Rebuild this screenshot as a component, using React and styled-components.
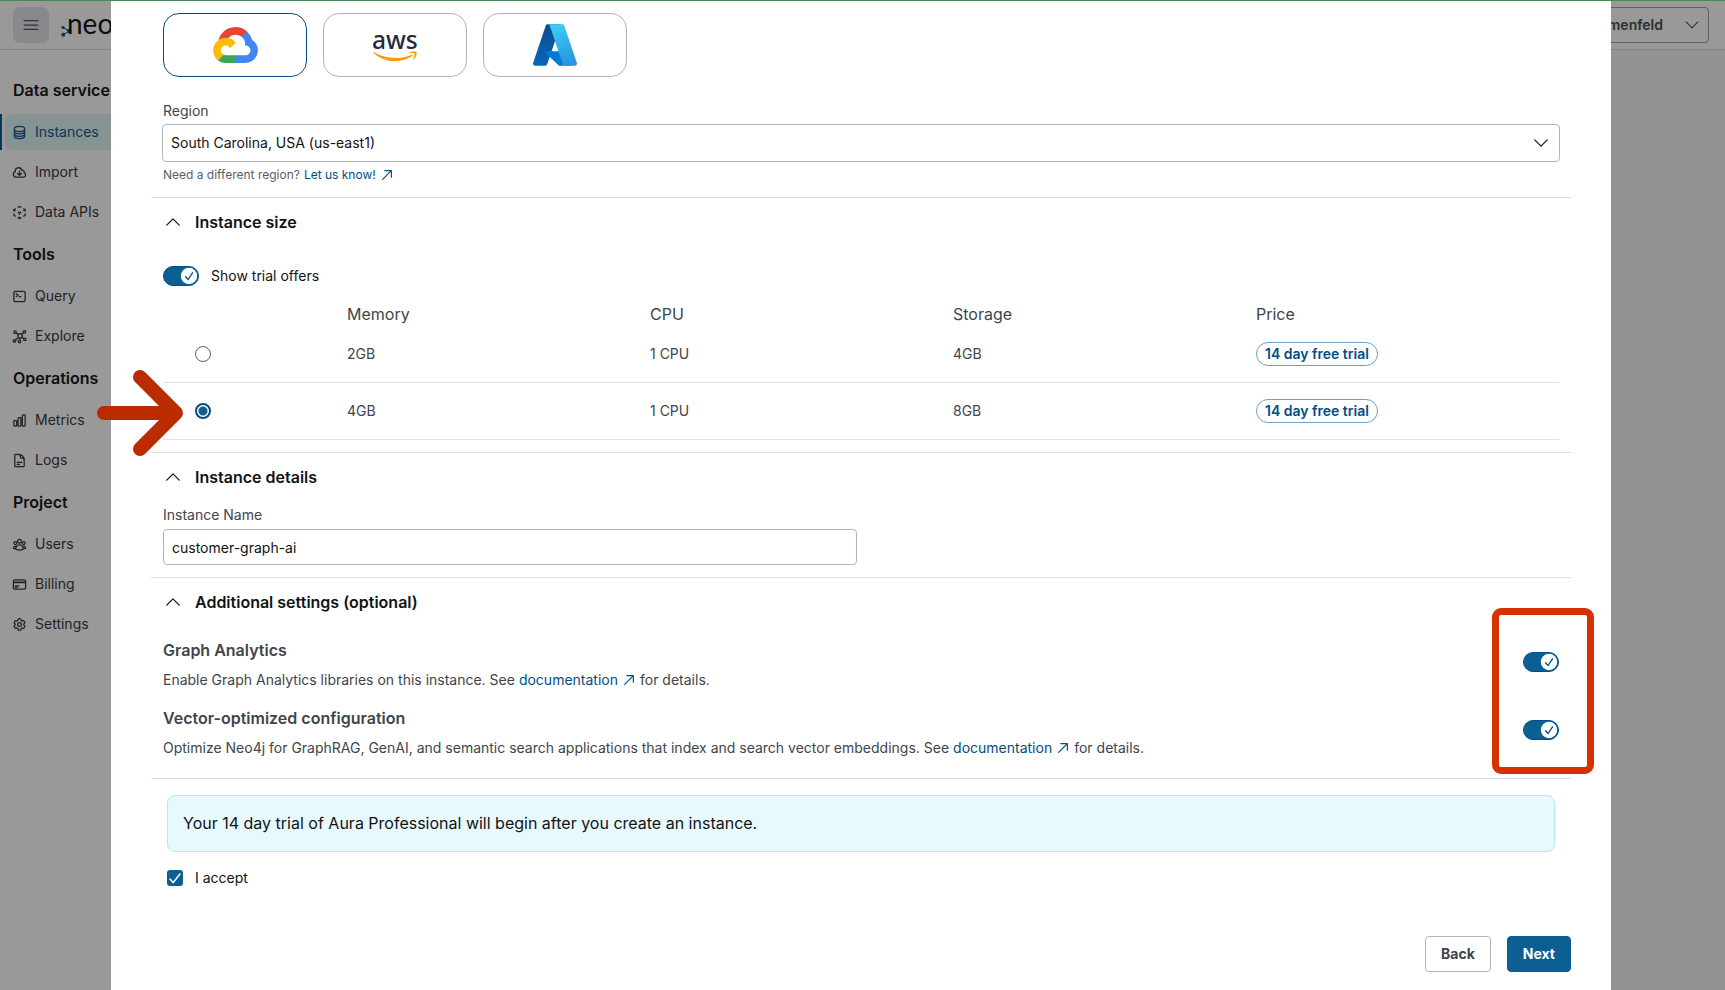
import React, { useState } from 'react';
import styled, { createGlobalStyle, css } from 'styled-components';
import {
  HiOutlineCircleStack,
  HiOutlineCloudArrowDown,
  HiOutlineCubeTransparent,
  HiOutlineCommandLine,
  HiOutlineChartBar,
  HiOutlineDocumentText,
  HiOutlineUserGroup,
  HiOutlineCreditCard,
  HiOutlineCog6Tooth,
  HiOutlineBars3,
  HiOutlineChevronUp,
  HiOutlineChevronDown,
  HiOutlineArrowUpRight,
} from 'react-icons/hi2';

const color = {
  primary: '#0b5f92',
  primaryDark: '#014e85',
  link: '#014e85',
  text: '#111315',
  textSoft: '#40454c',
  textMuted: '#5a6069',
  line: '#dfe0e2',
  field: '#b2b5ba',
};

const GlobalStyle = createGlobalStyle`
  *, *::before, *::after { box-sizing: border-box; }
  body {
    margin: 0;
    font-family: Inter, "Liberation Sans", sans-serif;
    font-size: 14px;
    line-height: 20px;
    color: ${color.text};
  }
  button, input, select { font: inherit; color: inherit; margin: 0; }
  h2, h3, p, ul { margin: 0; padding: 0; }
  ul { list-style: none; }
  a { color: ${color.link}; text-decoration: none; }
  svg { display: block; flex: none; }
`;

const Page = styled.div`
  display: grid;
  grid-template-columns: minmax(0, 1fr);
  min-height: 100vh;
  overflow: hidden;
  border-top: 1px solid #4f8554;
`;

/* Console behind the dialog */

const Shell = styled.div`
  grid-area: 1 / 1;
  display: flex;
  flex-direction: column;
  background: #f3f7f5;
`;

const TopBar = styled.header`
  display: flex;
  align-items: center;
  gap: 12px;
  height: 49px;
  padding: 0 16px 0 13px;
  background: #fff;
  border-bottom: 1px solid #d9dbdd;
`;

const MenuButton = styled.button`
  display: grid;
  place-items: center;
  width: 36px;
  height: 36px;
  padding: 0;
  border: 0;
  border-radius: 7px;
  background: #e2e4e7;
  color: #50555c;
`;

const Brand = styled.div`
  display: flex;
  align-items: center;
  padding-bottom: 4px;
  font: 400 28px/32px Lato, sans-serif;
  color: #14171a;
  svg { margin-right: -5px; }
`;

const AccountButton = styled.button`
  display: flex;
  align-items: center;
  justify-content: flex-end;
  gap: 20px;
  width: 160px;
  height: 36px;
  margin-left: auto;
  padding: 0 7px;
  border: 1px solid #9b9fa5;
  border-radius: 4px;
  background: transparent;
  color: #4a4f56;
  font-weight: 600;
`;

const Sidebar = styled.nav`
  flex: 1;
  width: 200px;
  padding-top: 16px;
  background: #fff;
`;

const NavHeading = styled.h2`
  padding-left: 13px;
  font-size: 16px;
  line-height: 48px;
  font-weight: 600;
  color: #16191c;
`;

const NavList = styled.ul`
  display: flex;
  flex-direction: column;
  gap: 4px;
`;

const NavItem = styled.li`
  padding-left: 3px;
  border-left: 2px solid ${(p) => (p.$active ? color.primary : 'transparent')};
`;

const NavLink = styled.a`
  display: flex;
  align-items: center;
  gap: 8px;
  height: 36px;
  padding-left: 7px;
  border-radius: 7px;
  color: #35393f;
  ${(p) =>
    p.$active &&
    css`
      background: #e0f5f6;
      color: ${color.primary};
    `}
  svg { stroke-width: 2; }
`;

const Backdrop = styled.div`
  grid-area: 1 / 1;
  z-index: 1;
  display: flex;
  padding: 0 114px 0 111px;
  background: rgba(0, 0, 0, 0.4);
`;

/* Dialog */

const Dialog = styled.main`
  flex: 1;
  min-width: 0;
  padding: 12px 40px 16px;
  background: #fff;
`;

const Section = styled.section`
  padding: 0 12px ${(p) => p.$bottom || 12}px;
  border-bottom: 1px solid ${color.line};
`;

const Providers = styled.div`
  display: flex;
  gap: 16px;
  margin-bottom: 24px;
`;

const ProviderCard = styled.button`
  display: grid;
  place-items: center;
  width: 144px;
  height: 64px;
  padding: 0;
  border: 1px solid ${(p) => (p.$selected ? color.primaryDark : color.field)};
  border-radius: 16px;
  background: #fff;
`;

const FieldLabel = styled.label`
  display: block;
  color: ${color.textSoft};
`;

const SelectBox = styled.div`
  display: grid;
  align-items: center;
  margin: 3px -1px 5px;
  > * { grid-area: 1 / 1; }
  > svg {
    justify-self: end;
    margin-right: 9px;
    pointer-events: none;
  }
`;

const Select = styled.select`
  appearance: none;
  width: 100%;
  height: 38px;
  padding: 0 8px;
  border: 1px solid ${color.field};
  border-radius: 4px;
  background: #fff;
`;

const HelpText = styled.p`
  display: flex;
  align-items: center;
  gap: 4px;
  font-size: 12px;
  line-height: 16px;
  color: ${color.textMuted};
`;

const ExternalLink = styled.a`
  display: inline-flex;
  align-items: center;
  gap: 4px;
  svg { stroke-width: 2; }
`;

const SectionTitle = styled.h2`
  font-size: 16px;
  line-height: 24px;
`;

const SectionToggle = styled.button`
  display: flex;
  align-items: center;
  gap: 12px;
  width: 100%;
  height: 48px;
  padding: 0;
  border: 0;
  background: none;
  font-weight: 600;
  text-align: left;
`;

const SwitchBox = styled.span`
  display: inline-grid;
  flex: none;
  > * { grid-area: 1 / 1; }
  > svg { pointer-events: none; }
`;

const SwitchInput = styled.input`
  appearance: none;
  width: 36px;
  height: 20px;
  border-radius: 10px;
  border: 1px solid ${color.primaryDark};
  background: ${color.primary};
`;

const OfferToggle = styled.label`
  display: flex;
  align-items: center;
  gap: 12px;
  margin: 20px 0 16px;
`;

const SizeTable = styled.table`
  width: 100%;
  table-layout: fixed;
  border-collapse: separate;
  border-spacing: 0;
  color: ${color.textSoft};
`;

const HeadCell = styled.th`
  width: ${(p) => (p.$narrow ? '184px' : 'auto')};
  height: 24px;
  padding: 0;
  font-size: 16px;
  font-weight: 400;
  text-align: left;
`;

const Cell = styled.td`
  height: 57px;
  padding: 0;
  border-bottom: 1px solid ${color.line};
`;

const RadioCell = styled(Cell)`
  position: relative;
  padding-left: 32px;
`;

const Radio = styled.input`
  appearance: none;
  display: block;
  width: 16px;
  height: 16px;
  border: 1px solid #5a6069;
  border-radius: 50%;
  background: #fff;
  &:checked {
    border: 2px solid ${color.primaryDark};
    background: radial-gradient(circle, ${color.primary} 4px, #fff 5px);
  }
`;

const TrialPill = styled.span`
  display: inline-block;
  padding: 1px 8px;
  border: 1px solid #6f9fc4;
  border-radius: 12px;
  font-weight: 600;
  color: ${color.link};
`;

const ArrowCallout = styled.svg`
  position: absolute;
  left: -66px;
  top: -14px;
  pointer-events: none;
`;

const TextInput = styled.input`
  display: block;
  width: calc(50% - 4px);
  height: 36px;
  margin-top: 4px;
  padding: 0 8px;
  border: 1px solid ${color.field};
  border-radius: 4px;
  background: #fff;
`;

const DetailsBody = styled.div`
  padding-top: 4px;
`;

const SettingsList = styled.div`
  position: relative;
  display: flex;
  flex-direction: column;
  gap: 16px;
  margin-top: 12px;
`;

const Setting = styled.div`
  display: flex;
  justify-content: space-between;
  align-items: flex-start;
  color: ${color.textSoft};
  > span { margin-top: 14px; }
`;

const SettingTitle = styled.h3`
  margin-bottom: 8px;
  font-size: 16px;
  line-height: 24px;
  font-weight: 600;
`;

const SettingText = styled.p`
  display: flex;
  gap: 4px;
`;

const BoxCallout = styled.div`
  position: absolute;
  top: -30px;
  right: -35px;
  bottom: -16px;
  width: 102px;
  border: 7px solid #d43300;
  border-radius: 9px;
  pointer-events: none;
`;

const Banner = styled.p`
  margin: 16px;
  padding: 15px 15px 16px;
  border: 1px solid #b0ebee;
  border-radius: 8px;
  background: #e7f9fd;
  font-size: 16px;
  line-height: 24px;
`;

const Accept = styled.label`
  display: flex;
  align-items: center;
  gap: 12px;
  width: fit-content;
  margin-left: 16px;
`;

const AcceptInput = styled.input`
  appearance: none;
  width: 16px;
  height: 16px;
  border-radius: 3px;
  background: ${color.primary};
`;

const Actions = styled.footer`
  display: flex;
  justify-content: flex-end;
  gap: 16px;
  margin-top: 48px;
`;

const ActionButton = styled.button`
  height: 36px;
  padding: 0 15px;
  border: 1px solid ${(p) => (p.$primary ? color.primary : color.field)};
  border-radius: 4px;
  background: ${(p) => (p.$primary ? color.primary : '#fff')};
  color: ${(p) => (p.$primary ? '#fff' : color.textSoft)};
  font-weight: 700;
`;

/* Drawings */

const GoogleCloudLogo = () => (
  <svg width="45" height="36" viewBox="0 0 256 206" aria-hidden="true">
    <path fill="#EA4335" d="M170.25 56.82l22.25-22.25 1.49-9.37C153.44-11.68 88.98-7.5 52.42 33.92 42.27 45.42 34.73 59.76 30.72 74.57l7.97-1.12 44.5-7.34 3.44-3.51c19.8-21.75 53.27-24.67 76.13-6.17l7.49.39z" />
    <path fill="#4285F4" d="M224.2 73.92a100.25 100.25 0 0 0-30.21-48.72l-31.23 31.23a55.52 55.52 0 0 1 20.37 44.04v5.54a27.8 27.8 0 1 1 0 55.28h-55.67l-5.46 5.93v33.34l5.46 5.23h55.67c39.93.31 72.56-31.49 72.87-71.42a72.32 72.32 0 0 0-31.8-60.45" />
    <path fill="#34A853" d="M71.87 205.8h55.59v-44.51H71.87a27.28 27.28 0 0 1-11.4-2.5l-7.89 2.42-22.4 22.25-1.96 7.58a72.16 72.16 0 0 0 43.65 14.76" />
    <path fill="#FBBC05" d="M71.87 61.43A72.3 72.3 0 0 0 28.22 191.04l32.25-32.25a27.8 27.8 0 1 1 36.78-36.77l32.25-32.25a72.23 72.23 0 0 0-57.63-28.34" />
  </svg>
);

const AwsLogo = () => (
  <svg width="44" height="50" viewBox="0 -42 304 346" aria-label="aws">
    <text x="151" y="156" textAnchor="middle" fontFamily="'Noto Sans', sans-serif" fontSize="170" fontWeight="500" fill="#232b3c">aws</text>
    <g fill="#ff9900" transform="translate(0 62)">
      <path d="M273.5 143.7c-32.9 24.3-80.7 37.2-121.8 37.2-57.6 0-109.5-21.3-148.7-56.7-3.1-2.8-.3-6.6 3.4-4.4 42.4 24.6 94.7 39.5 148.8 39.5 36.5 0 76.6-7.6 113.5-23.2 5.5-2.5 10.2 3.6 4.8 7.6z" />
      <path d="M287.2 128.1c-4.2-5.4-27.8-2.6-38.5-1.3-3.2.4-3.7-2.4-.8-4.5 18.8-13.2 49.7-9.4 53.3-5 3.6 4.5-1 35.4-18.6 50.2-2.7 2.3-5.3 1.1-4.1-1.9 4-9.9 12.9-32.2 8.7-37.5z" />
    </g>
  </svg>
);

const AzureLogo = () => (
  <svg width="48" height="48" viewBox="0 0 96 96" aria-hidden="true">
    <defs>
      <linearGradient id="azLeft" x1="-1032" x2="-1059" y1="145" y2="66" gradientTransform="matrix(1 0 0 -1 1075 158)" gradientUnits="userSpaceOnUse">
        <stop stopColor="#114a8b" /><stop offset="1" stopColor="#0669bc" />
      </linearGradient>
      <linearGradient id="azRight" x1="-1027" x2="-998" y1="147" y2="68" gradientTransform="matrix(1 0 0 -1 1075 158)" gradientUnits="userSpaceOnUse">
        <stop stopColor="#3ccbf4" /><stop offset="1" stopColor="#2892df" />
      </linearGradient>
    </defs>
    <path fill="url(#azLeft)" d="M33.338 6.544h26.038l-27.03 80.087a4.152 4.152 0 0 1-3.933 2.824H8.149a4.145 4.145 0 0 1-3.928-5.47L29.404 9.368a4.152 4.152 0 0 1 3.934-2.825z" />
    <path fill="#0078d4" d="M71.175 60.261h-41.29a1.911 1.911 0 0 0-1.305 3.309l26.532 24.764a4.171 4.171 0 0 0 2.846 1.121h23.38z" />
    <path fill="url(#azRight)" d="M66.595 9.364a4.145 4.145 0 0 0-3.928-2.82H33.648a4.146 4.146 0 0 1 3.928 2.82l25.184 74.62a4.146 4.146 0 0 1-3.928 5.472h29.02a4.146 4.146 0 0 0 3.927-5.472z" />
  </svg>
);

const NeoMark = () => (
  <svg width="11" height="28" viewBox="0 0 11 28" aria-hidden="true">
    <g fill="#0b5f92" stroke="#0b5f92">
      <path d="M2 18.500L8 22 2 26" fill="none" strokeWidth="1" />
      <circle cx="2" cy="18.500" r="1.600" stroke="none" />
      <circle cx="8.200" cy="22" r="2.200" stroke="none" />
      <circle cx="2.300" cy="25.800" r="2" stroke="none" />
    </g>
  </svg>
);

const ExploreIcon = ({ size }) => (
  <svg width={size} height={size} viewBox="0 0 24 24" fill="none" stroke="currentColor" aria-hidden="true">
    <circle cx="13" cy="11" r="3.500" />
    <circle cx="5" cy="5" r="2" />
    <circle cx="20" cy="4.500" r="2" />
    <circle cx="4" cy="19" r="2" />
    <circle cx="12" cy="20" r="2" />
    <circle cx="20.500" cy="16.500" r="2" />
    <path d="M6.500 6.300l4 2.700M15.500 8.500l3-2.700M5.500 17.500l5-4M12.300 18l.4-3.500M16 13l2.800 2.300" />
  </svg>
);

/* Composite parts */

const Switch = ({ label, id }) => {
  const [on, setOn] = useState(true);
  return (
    <SwitchBox>
      <SwitchInput id={id} type="checkbox" role="switch" aria-label={label} checked={on} onChange={() => setOn(!on)} />
      <svg width="36" height="20" viewBox="0 0 36 20" aria-hidden="true">
        <circle cx={on ? 26 : 10} cy="10" r="8.200" fill="#fff" />
        {on && <path d="M22.500 10.800l2.600 2.700 4.400-6.700" fill="none" stroke={color.primaryDark} strokeWidth="1.300" strokeLinecap="round" />}
      </svg>
    </SwitchBox>
  );
};

const SectionHeader = ({ children }) => (
  <SectionTitle>
    <SectionToggle type="button" aria-expanded="true">
      <HiOutlineChevronUp size={20} />
      {children}
    </SectionToggle>
  </SectionTitle>
);

const DocLink = ({ children }) => (
  <ExternalLink href="#docs">
    {children}
    <HiOutlineArrowUpRight size={14} />
  </ExternalLink>
);

const navGroups = [
  { title: 'Data service', items: [['Instances', HiOutlineCircleStack], ['Import', HiOutlineCloudArrowDown], ['Data APIs', HiOutlineCubeTransparent]] },
  { title: 'Tools', items: [['Query', HiOutlineCommandLine], ['Explore', ExploreIcon]] },
  { title: 'Operations', items: [['Metrics', HiOutlineChartBar], ['Logs', HiOutlineDocumentText]] },
  { title: 'Project', items: [['Users', HiOutlineUserGroup], ['Billing', HiOutlineCreditCard], ['Settings', HiOutlineCog6Tooth]] },
];

const sizes = [
  { memory: '2GB', cpu: '1 CPU', storage: '4GB' },
  { memory: '4GB', cpu: '1 CPU', storage: '8GB' },
];

export default function App() {
  const [provider, setProvider] = useState('gcp');
  const [size, setSize] = useState('4GB');
  const [name, setName] = useState('customer-graph-ai');
  const [accepted, setAccepted] = useState(true);
  const providers = [['gcp', 'Google Cloud', GoogleCloudLogo], ['aws', 'AWS', AwsLogo], ['azure', 'Azure', AzureLogo]];

  return (
    <>
      <GlobalStyle />
      <Page>
        <Shell>
          <TopBar>
            <MenuButton type="button" aria-label="Menu"><HiOutlineBars3 size={20} /></MenuButton>
            <Brand><NeoMark />neo</Brand>
            <AccountButton type="button">menfeld<HiOutlineChevronDown size={18} /></AccountButton>
          </TopBar>
          <Sidebar>
            {navGroups.map((group) => (
              <React.Fragment key={group.title}>
                <NavHeading>{group.title}</NavHeading>
                <NavList>
                  {group.items.map(([label, Icon]) => (
                    <NavItem key={label} $active={label === 'Instances'}>
                      <NavLink href="#nav" $active={label === 'Instances'}><Icon size={15} />{label}</NavLink>
                    </NavItem>
                  ))}
                </NavList>
              </React.Fragment>
            ))}
          </Sidebar>
        </Shell>

        <Backdrop>
          <Dialog>
            <Section $bottom={14}>
              <Providers>
                {providers.map(([id, label, Logo]) => (
                  <ProviderCard key={id} type="button" aria-label={label} $selected={provider === id} onClick={() => setProvider(id)}>
                    <Logo />
                  </ProviderCard>
                ))}
              </Providers>
              <FieldLabel htmlFor="region">Region</FieldLabel>
              <SelectBox>
                <Select id="region"><option>South Carolina, USA (us-east1)</option></Select>
                <HiOutlineChevronDown size={20} />
              </SelectBox>
              <HelpText>Need a different region? <DocLink>Let us know!</DocLink></HelpText>
            </Section>

            <Section>
              <SectionHeader>Instance size</SectionHeader>
              <OfferToggle htmlFor="offers"><Switch id="offers" />Show trial offers</OfferToggle>
              <SizeTable>
                <thead>
                  <tr>
                    <HeadCell $narrow />
                    <HeadCell>Memory</HeadCell>
                    <HeadCell>CPU</HeadCell>
                    <HeadCell>Storage</HeadCell>
                    <HeadCell>Price</HeadCell>
                  </tr>
                </thead>
                <tbody>
                  {sizes.map((s) => (
                    <tr key={s.memory}>
                      <RadioCell>
                        <Radio type="radio" name="size" aria-label={s.memory} checked={size === s.memory} onChange={() => setSize(s.memory)} />
                        {s.memory === '4GB' && (
                          <ArrowCallout width="88" height="88" viewBox="0 0 88 88" aria-hidden="true">
                            <path d="M7 44H79M43 8L79 44L43 80" fill="none" stroke="#ba2c00" strokeWidth="14" strokeLinecap="round" strokeLinejoin="round" />
                          </ArrowCallout>
                        )}
                      </RadioCell>
                      <Cell>{s.memory}</Cell>
                      <Cell>{s.cpu}</Cell>
                      <Cell>{s.storage}</Cell>
                      <Cell><TrialPill>14 day free trial</TrialPill></Cell>
                    </tr>
                  ))}
                </tbody>
              </SizeTable>
            </Section>

            <Section>
              <SectionHeader>Instance details</SectionHeader>
              <DetailsBody>
                <FieldLabel htmlFor="name">Instance Name</FieldLabel>
                <TextInput id="name" type="text" value={name} onChange={(e) => setName(e.target.value)} />
              </DetailsBody>
            </Section>

            <Section $bottom={20}>
              <SectionHeader>Additional settings (optional)</SectionHeader>
              <SettingsList>
                <Setting>
                  <div>
                    <SettingTitle>Graph Analytics</SettingTitle>
                    <SettingText>Enable Graph Analytics libraries on this instance. See <DocLink>documentation</DocLink> for details.</SettingText>
                  </div>
                  <Switch label="Graph Analytics" />
                </Setting>
                <Setting>
                  <div>
                    <SettingTitle>Vector-optimized configuration</SettingTitle>
                    <SettingText>Optimize Neo4j for GraphRAG, GenAI, and semantic search applications that index and search vector embeddings. See <DocLink>documentation</DocLink> for details.</SettingText>
                  </div>
                  <Switch label="Vector-optimized configuration" />
                </Setting>
                <BoxCallout />
              </SettingsList>
            </Section>

            <Banner>Your 14 day trial of Aura Professional will begin after you create an instance.</Banner>
            <Accept>
              <SwitchBox>
                <AcceptInput type="checkbox" checked={accepted} onChange={() => setAccepted(!accepted)} />
                {accepted && (
                  <svg width="16" height="16" viewBox="0 0 16 16" aria-hidden="true">
                    <path d="M3 9l3.200 3.500L13 4" fill="none" stroke="#fff" strokeWidth="1.500" strokeLinecap="round" />
                  </svg>
                )}
              </SwitchBox>
              I accept
            </Accept>
            <Actions>
              <ActionButton type="button">Back</ActionButton>
              <ActionButton type="button" $primary>Next</ActionButton>
            </Actions>
          </Dialog>
        </Backdrop>
      </Page>
    </>
  );
}
